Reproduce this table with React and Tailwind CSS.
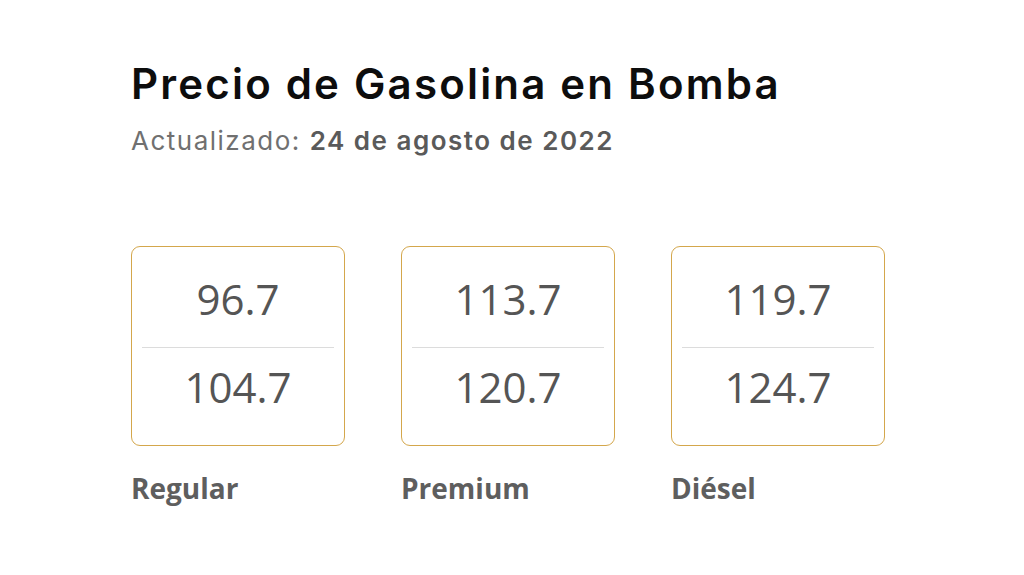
export default function App() {
  const items = [
    { a: "96.7", b: "104.7", label: "Regular" },
    { a: "113.7", b: "120.7", label: "Premium" },
    { a: "119.7", b: "124.7", label: "Diésel" },
  ];
  return (
    <div className="w-[1024px] h-[575px] bg-white overflow-hidden pl-[131px] pt-[59px]">
      <h1 className="text-[42px] leading-[50px] font-semibold text-[#0d0d0d] tracking-[2.2px] [font-family:Inter,sans-serif]">
        Precio de Gasolina en Bomba
      </h1>
      <p className="mt-[17px] text-[26px] leading-[30px] text-[#707070] tracking-[1.5px] [font-family:Inter,sans-serif]">
        Actualizado: <span className="font-semibold text-[#5a5a5a]">24 de agosto de 2022</span>
      </p>
      <div className="mt-[90px] flex gap-[56px]">
        {items.map((it) => (
          <div key={it.label} className="w-[214px]">
            <div className="h-[200px] border border-[#d4a74c] rounded-[9px] px-[10px] flex flex-col [font-family:'Open_Sans',sans-serif] text-[#555]">
              <div className="h-[100px] flex items-center justify-center text-[42px] pt-[3px]">{it.a}</div>
              <div className="h-px bg-[#dcdcdc]" />
              <div className="h-[76px] flex items-center justify-center text-[42px]">{it.b}</div>
            </div>
            <div className="mt-[26px] text-[28px] leading-[32px] font-bold text-[#5e5e5e] [font-family:'Open_Sans',sans-serif]">
              {it.label}
            </div>
          </div>
        ))}
      </div>
    </div>
  );
}
